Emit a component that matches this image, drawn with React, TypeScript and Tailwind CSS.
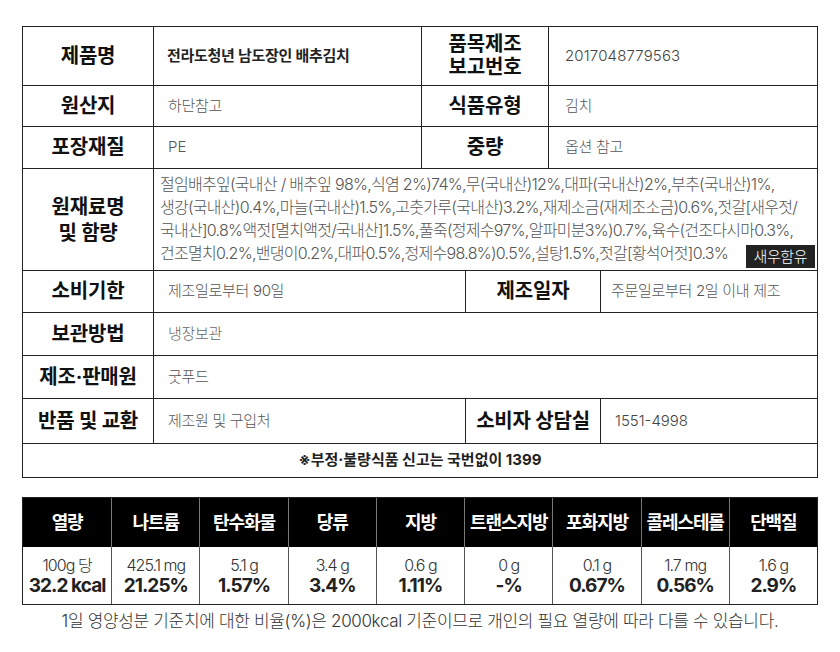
import React from "react";

const ROW_4 = "grid grid-cols-[131px_268px_127px_1fr]";
const ROW_SPLIT = "grid grid-cols-[131px_312px_135px_1fr]";
const ROW_2 = "grid grid-cols-[131px_1fr]";

const INGREDIENT_LINES = [
  "절임배추잎(국내산 / 배추잎 98%,식염 2%)74%,무(국내산)12%,대파(국내산)2%,부추(국내산)1%,",
  "생강(국내산)0.4%,마늘(국내산)1.5%,고춧가루(국내산)3.2%,재제소금(재제조소금)0.6%,젓갈[새우젓/",
  "국내산]0.8%액젓[멸치액젓/국내산]1.5%,풀죽(정제수97%,알파미분3%)0.7%,육수(건조다시마0.3%,",
  "건조멸치0.2%,밴댕이0.2%,대파0.5%,정제수98.8%)0.5%,설탕1.5%,젓갈[황석어젓]0.3%",
];

const NUTRITION = [
  { name: "열량", amount: "100g 당", value: "32.2 kcal" },
  { name: "나트륨", amount: "425.1 mg", value: "21.25%" },
  { name: "탄수화물", amount: "5.1 g", value: "1.57%" },
  { name: "당류", amount: "3.4 g", value: "3.4%" },
  { name: "지방", amount: "0.6 g", value: "1.11%" },
  { name: "트랜스지방", amount: "0 g", value: "-%" },
  { name: "포화지방", amount: "0.1 g", value: "0.67%" },
  { name: "콜레스테롤", amount: "1.7 mg", value: "0.56%" },
  { name: "단백질", amount: "1.6 g", value: "2.9%" },
];

const Label = ({ children }: { children: React.ReactNode }) => (
  <div className="flex items-center justify-center border-r border-b border-[#222] text-center text-[20px] leading-[23px] font-bold tracking-[-0.01em] text-[#111]">
    {children}
  </div>
);

const Value = ({
  children,
  className = "",
}: {
  children: React.ReactNode;
  className?: string;
}) => (
  <div
    className={`flex items-center border-r border-b border-[#222] text-[15px] ${className}`}
  >
    {children}
  </div>
);

const App = () => {
  return (
    <div className="w-[840px] h-[652px] bg-white pl-[22px] pt-[26px] font-['Inter','Noto_Sans_CJK_KR',sans-serif]">
      {/* product info */}
      <div className="w-[796px] border-l border-t border-[#222]">
        <div className={`${ROW_4} h-[59px]`}>
          <Label>제품명</Label>
          <Value className="pl-[13px] font-semibold tracking-[-0.02em] text-[#222]">
            전라도청년 남도장인 배추김치
          </Value>
          <Label>
            품목제조
            <br />
            보고번호
          </Label>
          <Value className="pl-[16px] font-light tracking-[0.01em] text-[#444]">
            2017048779563
          </Value>
        </div>
        <div className={`${ROW_4} h-[41px]`}>
          <Label>원산지</Label>
          <Value className="pl-[14px] font-light tracking-[-0.02em] text-[#555]">하단참고</Value>
          <Label>식품유형</Label>
          <Value className="pl-[16px] font-light tracking-[-0.02em] text-[#555]">김치</Value>
        </div>
        <div className={`${ROW_4} h-[42px]`}>
          <Label>포장재질</Label>
          <Value className="pl-[14px] font-light text-[#555]">PE</Value>
          <Label>중량</Label>
          <Value className="pl-[16px] font-light tracking-[-0.02em] text-[#555]">옵션 참고</Value>
        </div>
        <div className={`${ROW_2} h-[102px]`}>
          <Label>
            <span className="leading-[26px]">
              원재료명
              <br />
              및 함량
            </span>
          </Label>
          <div className="relative flex flex-col justify-center border-r border-b border-[#222] pl-[6px] pb-[2px] text-[16px] leading-[23px] font-light tracking-[-0.045em] text-[#555]">
            {INGREDIENT_LINES.map((line) => (
              <div key={line} className="whitespace-nowrap">
                {line}
              </div>
            ))}
            <span className="absolute right-[2px] bottom-[2px] bg-[#222] px-[8px] text-[15px] leading-[23px] tracking-[-0.03em] text-white">
              새우함유
            </span>
          </div>
        </div>
        <div className={`${ROW_SPLIT} h-[42px]`}>
          <Label>소비기한</Label>
          <Value className="pl-[14px] font-light tracking-[-0.02em] text-[#555]">
            제조일로부터 90일
          </Value>
          <Label>제조일자</Label>
          <Value className="pl-[10px] font-light tracking-[-0.02em] text-[#555]">
            주문일로부터 2일 이내 제조
          </Value>
        </div>
        <div className={`${ROW_2} h-[43px]`}>
          <Label>보관방법</Label>
          <Value className="pl-[14px] font-light tracking-[-0.02em] text-[#666]">냉장보관</Value>
        </div>
        <div className={`${ROW_2} h-[43px]`}>
          <Label>제조·판매원</Label>
          <Value className="pl-[14px] font-light tracking-[-0.02em] text-[#555]">굿푸드</Value>
        </div>
        <div className={`${ROW_SPLIT} h-[45px]`}>
          <Label>반품 및 교환</Label>
          <Value className="pl-[14px] font-light tracking-[-0.02em] text-[#555]">
            제조원 및 구입처
          </Value>
          <Label>소비자 상담실</Label>
          <Value className="pl-[14px] font-light text-[#444]">1551-4998</Value>
        </div>
        <div className="flex h-[34px] items-center justify-center border-r border-b border-[#222] text-[15px] font-bold text-[#222]">
          ※부정·불량식품 신고는 국번없이 1399
        </div>
      </div>

      {/* nutrition facts */}
      <div className="mt-[19px] w-[796px] border border-[#222]">
        <div className="grid h-[49px] grid-cols-9 bg-black">
          {NUTRITION.map((item, i) => (
            <div
              key={item.name}
              className={`${
                i === 0 ? "" : "border-l border-[#777]"
              } flex items-center justify-center whitespace-nowrap text-[18px] font-bold tracking-[-0.06em] text-white`}
            >
              {item.name}
            </div>
          ))}
        </div>
        <div className="grid h-[57px] grid-cols-9">
          {NUTRITION.map((item, i) => (
            <div
              key={item.name}
              className={`${
                i === 0 ? "" : "border-l border-[#555]"
              } flex flex-col items-center justify-center whitespace-nowrap`}
            >
              <span className="text-[16px] leading-[19px] font-light tracking-[-0.06em] text-[#333]">
                {item.amount}
              </span>
              <span className="text-[19px] leading-[21px] font-bold tracking-[-0.05em] text-[#222]">
                {item.value}
              </span>
            </div>
          ))}
        </div>
      </div>

      <p className="mt-[4px] w-[796px] text-center text-[17px] leading-[24px] font-light tracking-[-0.02em] text-[#333]">
        1일 영양성분 기준치에 대한 비율(%)은 2000kcal 기준이므로 개인의 필요 열량에
        따라 다를 수 있습니다.
      </p>
    </div>
  );
};

export default App;
